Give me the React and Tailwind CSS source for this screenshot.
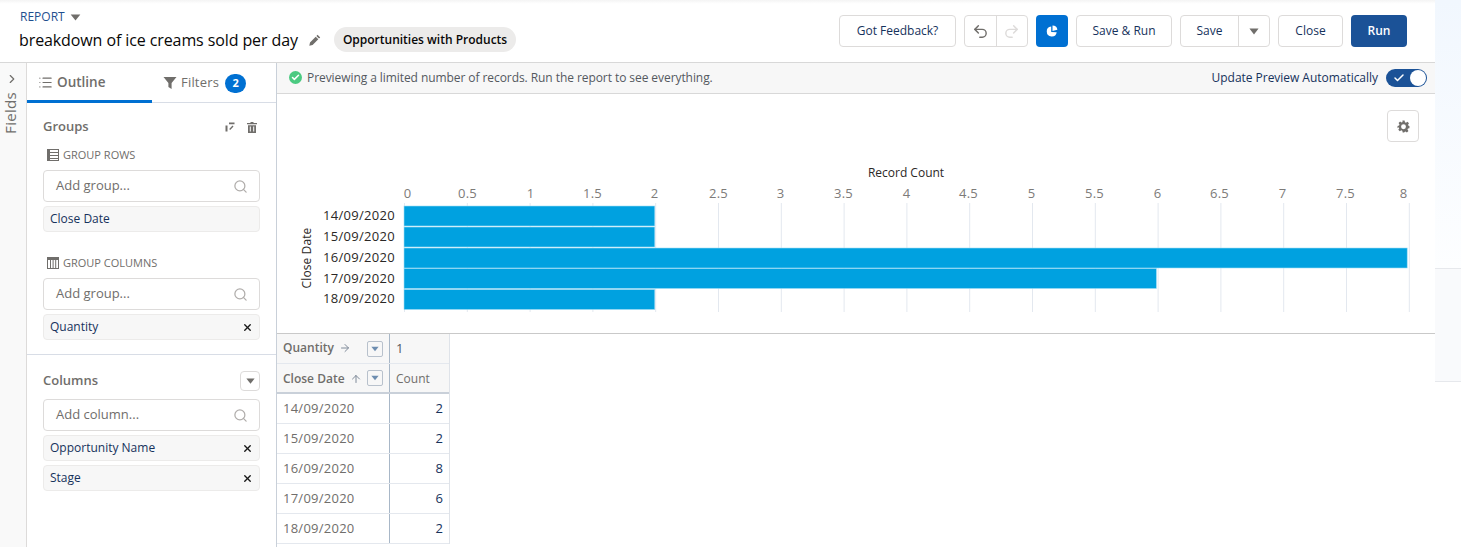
import React from "react";
import { Search, X, Undo2, Redo2, List, Check, ChevronRight, ArrowRight, ArrowUp } from "lucide-react";

const Caret = ({ className = "" }) => (
  <svg viewBox="0 0 12 8" className={className} fill="currentColor"><path d="M0.5 0.5h11L6 7.5z" /></svg>
);

const Btn = ({ w, children, cls = "" }) => (
  <button className={`h-8 ${w} flex items-center justify-center rounded border border-[#dddbda] bg-white text-[#16325c] text-xs ${cls}`}>{children}</button>
);

const AddInput = ({ label }) => (
  <div className="h-8 w-[217px] rounded border border-[#dddbda] bg-white flex items-center pl-3 pr-[11px] justify-between">
    <span className="text-[13px] text-[#706e6b]">{label}</span>
    <Search size={15} strokeWidth={2} className="text-[#b0adab]" />
  </div>
);

const Chip = ({ label, x }) => (
  <div className="h-[26px] w-[217px] rounded border border-[#ecebea] bg-[#f7f7f7] flex items-center pl-[6px] pr-[6px] justify-between">
    <span className="text-xs text-[#16325c]">{label}</span>
    {x && <X size={11} strokeWidth={3} className="text-[#181818]" />}
  </div>
);

const Section = ({ children }) => (
  <div className="h-[18px] flex items-center gap-[4px] pl-[4px] text-[11px] text-[#706e6b] uppercase">{children}</div>
);

const MiniCaret = () => (
  <span className="w-4 h-4 rounded-[2px] border border-[#b8c1cc] bg-[#f7f7f7] flex items-center justify-center">
    <Caret className="w-2 h-[6px] text-[#6d8db0]" />
  </span>
);

const ticks = ["0", "0.5", "1", "1.5", "2", "2.5", "3", "3.5", "4", "4.5", "5", "5.5", "6", "6.5", "7", "7.5", "8"];
const tickX = [407.5, 467.5, 530.5, 592.5, 654.5, 718.5, 780.5, 843.5, 906.5, 968.5, 1031.5, 1094.5, 1157.5, 1219.5, 1282.5, 1345.5, 1403.5];
const bars = [
  ["14/09/2020", 206, 2, 215],
  ["15/09/2020", 227, 2, 236.5],
  ["16/09/2020", 248, 8, 257.5],
  ["17/09/2020", 268.5, 6, 278.5],
  ["18/09/2020", 289.5, 2, 298.5],
];

const Chart = () => (
  <svg width="1158" height="239" viewBox="277 94 1158 239" className="block" style={{ fontFamily: '"Open Sans", sans-serif' }}>
    {ticks.map((t, i) => (
      <line key={t} x1={404.5 + i * 62.8} x2={404.5 + i * 62.8} y1="203" y2="312" stroke="#e3e8ef" strokeWidth="1" />
    ))}
    {ticks.map((t, i) => (
      <text key={t} x={tickX[i]} y="198" textAnchor="middle" fontSize="13" letterSpacing="0.25" fill="#7d7b79">{t}</text>
    ))}
    <text x="906" y="177" textAnchor="middle" fontSize="12" fill="#2b2826">Record Count</text>
    {bars.map(([d, y, v, ty]) => (
      <g key={d}>
        <rect x="404" y={y} width={v * 125.4} height="20" fill="#00a1e0" stroke="#9edcf5" strokeWidth="0.6" />
        <text x="395" y={ty + 4.6} textAnchor="end" fontSize="13" letterSpacing="0.3" fill="#2b2826">{d}</text>
      </g>
    ))}
    <text transform="translate(311 258) rotate(-90)" textAnchor="middle" fontSize="12" letterSpacing="0.1" fill="#2b2826">Close Date</text>
  </svg>
);

const rows = [["14/09/2020", 2], ["15/09/2020", 2], ["16/09/2020", 8], ["17/09/2020", 6], ["18/09/2020", 2]];

export default function App() {
  return (
    <div className="w-[1461px] h-[547px] overflow-hidden flex bg-white text-[#16325c]" style={{ fontFamily: '"Open Sans", sans-serif' }}>
      <div className="w-[1435px] flex flex-col shrink-0">
        {/* header */}
        <header className="h-[63px] shrink-0 border-b border-[#d8d8d8] flex justify-between pr-[28px] pl-[19px] bg-linear-to-b from-[#f4f4f4] via-white via-[6%] to-white">
          <div className="flex flex-col pt-[9px]">
            <div className="flex items-center gap-[5px] pl-[1px] h-[16px]">
              <span className="text-xs text-[#1f4f8f]">REPORT</span>
              <Caret className="w-[11px] h-[7px] text-[#706e6b]" />
            </div>
            <div className="flex items-center mt-[2px] h-[25px]">
              <span className="text-base text-[#080707] tracking-[-0.1px]">breakdown of ice creams sold per day</span>
              <svg viewBox="0 0 12 12" className="w-3 h-3 ml-[11px] text-[#706e6b]" fill="currentColor"><path d="M8.6 0.8l2.6 2.6-1.2 1.2-2.6-2.6zM6.7 2.7l2.6 2.6-5.7 5.7-3.3 0.7 0.7-3.3z" /></svg>
              <span className="ml-[13px] h-[25px] px-[9px] rounded-full bg-[#ecebea] flex items-center text-xs font-semibold text-[#080707]">Opportunities with Products</span>
            </div>
          </div>
          <div className="flex items-start gap-2 pt-[15px]">
            <Btn w="w-[117px]">Got Feedback?</Btn>
            <div className="h-8 w-[64px] flex rounded border border-[#dddbda]">
              <span className="flex-1 flex items-center justify-center border-r border-[#dddbda]"><Undo2 size={17} strokeWidth={2} className="text-[#706e6b]" /></span>
              <span className="flex-1 flex items-center justify-center"><Redo2 size={17} strokeWidth={2} className="text-[#dddbda]" /></span>
            </div>
            <button className="h-8 w-8 rounded bg-[#0070d2] flex items-center justify-center">
              <svg viewBox="0 0 12 12" className="w-3 h-3" fill="#fff"><path d="M5.2 1.5A5 5 0 1 0 10.7 7.2L5.2 7z" /><path d="M6.5 0.6a5 5 0 0 1 4.9 4.2L6.5 5.9z" /></svg>
            </button>
            <Btn w="w-[96px]">Save &amp; Run</Btn>
            <div className="h-8 w-[90px] flex rounded border border-[#dddbda] text-xs text-[#16325c]">
              <span className="w-[58px] flex items-center justify-center border-r border-[#dddbda]">Save</span>
              <span className="flex-1 flex items-center justify-center"><Caret className="w-[10px] h-[7px] text-[#706e6b]" /></span>
            </div>
            <Btn w="w-[65px]">Close</Btn>
            <button className="h-8 w-[56px] rounded bg-[#1b5297] text-white text-xs font-semibold">Run</button>
          </div>
        </header>

        <div className="flex flex-1 min-h-0">
          {/* fields rail */}
          <aside className="w-[27px] shrink-0 bg-[#f9f9f9] border-r border-[#dddbda] flex flex-col items-center pt-[9px]">
            <ChevronRight size={14} strokeWidth={2} className="text-[#706e6b] ml-[-3px]" />
            <span className="mt-[6px] text-[15px] tracking-[0.3px] leading-[20px] text-[#706e6b] [writing-mode:vertical-rl] rotate-180 mr-[7px]">Fields</span>
          </aside>

          {/* outline panel */}
          <aside className="w-[250px] shrink-0 border-r border-[#c9d0d9] flex flex-col">
            <div className="h-[40px] shrink-0 flex border-b border-[#d8dde6]">
              <div className="w-[125px] h-[40px] border-b-[3px] border-[#0070d2] flex items-center pl-[11px] pt-[1px] gap-[4px] text-[13.5px] font-semibold text-[#706e6b]">
                <List size={15} strokeWidth={1.8} className="text-[#706e6b]" />
                <span>Outline</span>
              </div>
              <div className="flex-1 flex items-center pl-[11px] gap-[4px] text-[13px] tracking-[0.2px] text-[#706e6b] pt-[1px]">
                <svg viewBox="0 0 14 14" className="w-[14px] h-[14px] text-[#706e6b]" fill="currentColor"><path d="M0.5 1h13L8.6 7v6L5.4 11V7z" /></svg>
                <span>Filters</span>
                <span className="w-[21px] h-[19px] ml-[2px] rounded-full bg-[#0070d2] text-white text-[11px] font-bold flex items-center justify-center">2</span>
              </div>
            </div>

            <div className="pl-4 pt-[14px] pb-[14px] border-b border-[#d8dde6] h-[252px] shrink-0">
              <div className="w-[217px] flex items-center justify-between h-[20px]">
                <span className="text-[13px] font-semibold text-[#706e6b]">Groups</span>
                <div className="flex items-center gap-[12px] pr-[3px]">
                  <svg viewBox="0 0 10 10" className="w-[10px] h-[10px] text-[#706e6b]" fill="currentColor"><path d="M0.5 3.5h2v6h-2zM4 0.5h5.5v1.8H4zM7.5 3.6l1 1-3.3 3.3-1-1z" /></svg>
                  <svg viewBox="0 0 10 11" className="w-[10px] h-[11px] text-[#706e6b]" fill="currentColor"><path d="M3.5 0h3v1H10v1.3H0V1h3.5zM1 3.3h8V11H1zM2.8 4.6v5h1v-5zM6.2 4.6v5h1v-5z" /></svg>
                </div>
              </div>
              <div className="mt-[9px]">
                <Section>
                  <svg viewBox="0 0 12 12" className="w-3 h-3 text-[#706e6b]" fill="currentColor"><path d="M0 0h12v12H0zM3 1v2h8V1zM3 4v2h8V4zM3 7v2h8V7zM3 10v1h8v-1z" fillRule="evenodd" /></svg>
                  Group Rows
                </Section>
              </div>
              <div className="mt-[6px]"><AddInput label="Add group..." /></div>
              <div className="mt-1"><Chip label="Close Date" /></div>
              <div className="mt-[22px]">
                <Section>
                  <svg viewBox="0 0 12 12" className="w-3 h-3 text-[#706e6b]" fill="currentColor"><path d="M0 0h12v12H0zM1 3v8h2V3zM4 3v8h1.6V3zM6.6 3v8h1.6V3zM9.2 3v8H11V3z" fillRule="evenodd" /></svg>
                  Group Columns
                </Section>
              </div>
              <div className="mt-[6px]"><AddInput label="Add group..." /></div>
              <div className="mt-1"><Chip label="Quantity" x /></div>
            </div>

            <div className="pl-4 pt-4">
              <div className="w-[217px] flex items-center justify-between h-[20px]">
                <span className="text-[13px] font-semibold text-[#706e6b]">Columns</span>
                <span className="w-5 h-5 rounded border border-[#dddbda] flex items-center justify-center"><Caret className="w-[9px] h-[6px] text-[#706e6b]" /></span>
              </div>
              <div className="mt-2"><AddInput label="Add column..." /></div>
              <div className="mt-1"><Chip label="Opportunity Name" x /></div>
              <div className="mt-1"><Chip label="Stage" x /></div>
            </div>
          </aside>

          {/* content */}
          <main className="flex-1 min-w-0 flex flex-col">
            <div className="h-[31px] shrink-0 bg-[#f7f7f7] border-b border-[#d8d8d8] flex items-center justify-between pl-[12px] pr-[8px] pb-[1px]">
              <div className="flex items-center gap-[5px] text-xs tracking-[-0.07px] text-[#54595f]">
                <span className="w-[13px] h-[13px] rounded-full bg-[#4bca81] flex items-center justify-center"><Check size={9} strokeWidth={4} className="text-white" /></span>
                Previewing a limited number of records. Run the report to see everything.
              </div>
              <div className="flex items-center gap-[8px]">
                <span className="text-xs tracking-[-0.03px] text-[#16325c]">Update Preview Automatically</span>
                <span className="w-[41px] h-[18px] rounded-full bg-[#1b5297] flex items-center justify-between pl-[7px] pr-[1px]">
                  <Check size={12} strokeWidth={3} className="text-white" />
                  <span className="w-4 h-4 rounded-full bg-white" />
                </span>
              </div>
            </div>

            <div className="relative h-[240px] shrink-0 border-b border-[#c9c9c9]">
              <Chart />
              <button className="absolute right-[16px] top-[16px] w-8 h-8 rounded border border-[#dddbda] bg-white flex items-center justify-center">
                <svg viewBox="0 0 24 24" className="w-[13px] h-[13px] text-[#706e6b]" fill="currentColor"><path fillRule="evenodd" d="M10 1h4l.7 3.1 1.9.8 2.7-1.7 2.8 2.8-1.7 2.7.8 1.9L23 11v4l-2.8.7-.8 1.9 1.7 2.7-2.8 2.8-2.7-1.7-1.9.8L13.5 23h-3l-.7-3.1-1.9-.8-2.7 1.7-2.8-2.8 1.7-2.7-.8-1.9L1 15v-4l2.8-.7.8-1.9-1.7-2.7 2.8-2.8 2.7 1.7 1.9-.8zM12 8a4.5 4.5 0 1 0 0 9 4.5 4.5 0 0 0 0-9z" /></svg>
              </button>
            </div>

            <div className="w-[173px] border-r border-[#dfe3e9] text-xs">
              <div className="grid grid-cols-[113px_59px] h-[30px] border-b border-[#e4e8ee] bg-[#f7f7f7]">
                <div className="border-r border-[#a8b7c7] flex items-center pl-[6px] pr-[6px] justify-between">
                  <span className="flex items-center gap-[5px] font-semibold text-[#706e6b] -mt-[1px]">Quantity <ArrowRight size={12} strokeWidth={2} className="text-[#7f8a99]" /></span>
                  <MiniCaret />
                </div>
                <div className="flex items-center pl-[6px] text-[13px] text-[#54595f]">1</div>
              </div>
              <div className="grid grid-cols-[113px_59px] h-[30px] border-b-2 border-[#c9d0d9] bg-[#f7f7f7]">
                <div className="border-r border-[#a8b7c7] flex items-center pl-[6px] pr-[6px] justify-between">
                  <span className="flex items-center gap-[5px] font-semibold text-[#706e6b] pt-[2px]">Close Date <ArrowUp size={12} strokeWidth={2} className="text-[#7f8a99]" /></span>
                  <MiniCaret />
                </div>
                <div className="flex items-center pl-[6px] pt-[2px] text-[#706e6b]">Count</div>
              </div>
              {rows.map(([d, v]) => (
                <div key={d} className="grid grid-cols-[113px_59px] h-[30px] border-b border-[#e4e8ee]">
                  <div className="border-r border-[#a8b7c7] flex items-center pl-[6px] text-[13px] tracking-[0.25px] text-[#706e6b]">{d}</div>
                  <div className="flex items-center justify-end pr-[6px] text-[13px] text-[#16325c]">{v}</div>
                </div>
              ))}
            </div>
          </main>
        </div>
      </div>

      {/* right edge */}
      <div className="flex-1 flex flex-col">
        <div className="h-[269px] shrink-0 bg-linear-to-b from-[#f1f7fe] to-[#fdfeff] border-b border-[#e6e8ec]" />
        <div className="h-[113px] shrink-0 bg-[#f9fafc] border-b border-[#e6e8ec]" />
        <div className="flex-1 bg-white" />
      </div>
    </div>
  );
}
